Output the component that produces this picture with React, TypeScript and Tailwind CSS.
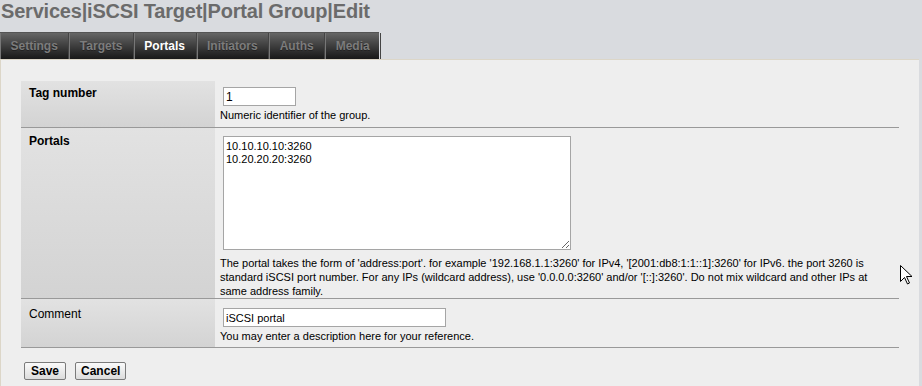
import React from "react";

const tabs = ["Settings", "Targets", "Portals", "Initiators", "Auths", "Media"];

export default function App() {
  return (
    <div className="relative w-[922px] h-[386px] overflow-hidden bg-[#d9dbdf] font-['Tahoma','Liberation_Sans',sans-serif] text-[11px] text-black">
      {/* Title */}
      <h1 className="h-[32px] pl-[1px] text-[20px] leading-[22px] font-bold text-[#6b6b6b] tracking-[-0.2px]">
        Services|iSCSI Target|Portal Group|Edit
      </h1>

      {/* Tabs */}
      <div className="flex h-[27px] w-[379px] border-t border-[#555] bg-gradient-to-b from-[#666] to-[#191919]">
        {tabs.map((t) => (
          <div
            key={t}
            className={
              "flex items-center px-[10.5px] text-[12px] font-bold border-r border-[#444] shadow-[inset_1px_0_0_#777] " +
              (t === "Portals" ? "text-white" : "text-[#7c7c7c] [text-shadow:0_1px_0_#222]")
            }
          >
            {t}
          </div>
        ))}
      </div>

      {/* Panel */}
      <div className="w-[919px] h-[330px] bg-[#eeeeee] border-t border-l border-[#dcd6c8] pt-[21px] pl-[20px]">
        <div className="w-[878px] border-b border-[#999]">
          {/* Tag number */}
          <div className="grid grid-cols-[194px_1fr] h-[47px] border-b border-[#999]">
            <div className="bg-gradient-to-b from-[#e2e2e2] to-[#d3d3d3] pl-[8px] pt-[5px] text-[12px] font-bold leading-[14px]">
              Tag number
            </div>
            <div className="pl-[5px] pt-[6px]">
              <input
                defaultValue="1"
                className="ml-[3px] block w-[73px] h-[19px] bg-white border border-[#a5a5a5] px-[2px] text-[12px] outline-none"
              />
              <div className="leading-[14px] mt-[2px]">Numeric identifier of the group.</div>
            </div>
          </div>

          {/* Portals */}
          <div className="grid grid-cols-[194px_1fr] h-[171px] border-b border-[#999]">
            <div className="bg-gradient-to-b from-[#e2e2e2] to-[#d3d3d3] pl-[8px] pt-[6px] text-[12px] font-bold leading-[14px]">
              Portals
            </div>
            <div className="pl-[5px] pt-[8px]">
              <textarea
                defaultValue={"10.10.10.10:3260\n10.20.20.20:3260"}
                className="ml-[3px] block w-[348px] h-[114px] bg-white border border-[#a5a5a5] px-[2px] py-[3px] text-[11px] leading-[13px] outline-none resize-y"
              />
              <div className="leading-[14px] mt-[6px] pr-[4px]">
                The portal takes the form of 'address:port'. for example '192.168.1.1:3260' for IPv4, '[2001:db8:1:1::1]:3260' for IPv6. the port 3260 is
                standard iSCSI port number. For any IPs (wildcard address), use '0.0.0.0:3260' and/or '[::]:3260'. Do not mix wildcard and other IPs at
                same address family.
              </div>
            </div>
          </div>

          {/* Comment */}
          <div className="grid grid-cols-[194px_1fr] h-[48px]">
            <div className="bg-gradient-to-b from-[#e2e2e2] to-[#d3d3d3] pl-[8px] pt-[8px] text-[12px] leading-[14px]">
              Comment
            </div>
            <div className="pl-[5px] pt-[9px]">
              <input
                defaultValue="iSCSI portal"
                className="ml-[3px] block w-[223px] h-[19px] bg-white border border-[#a5a5a5] px-[2px] text-[11px] outline-none"
              />
              <div className="leading-[14px] mt-[2px]">You may enter a description here for your reference.</div>
            </div>
          </div>
        </div>

        {/* Buttons */}
        <div className="flex gap-[9px] mt-[14px] pl-[3px]">
          <button className="h-[18px] px-[6px] rounded-[2px] border border-[#7a7a7a] bg-gradient-to-b from-[#fafafa] to-[#dcdcdc] text-[12px] font-bold leading-[14px]">
            Save
          </button>
          <button className="h-[18px] px-[5px] rounded-[2px] border border-[#7a7a7a] bg-gradient-to-b from-[#fafafa] to-[#dcdcdc] text-[12px] font-bold leading-[14px]">
            Cancel
          </button>
        </div>
      </div>

      {/* Mouse cursor */}
      <svg className="absolute left-[900px] top-[265px]" width="13" height="20" viewBox="0 0 13 20">
        <path d="M0.5 0.5 L0.5 16.5 L4.5 12.5 L7.5 19 L9.5 18 L6.5 11.5 L12 11.5 Z" fill="#fff" stroke="#000" strokeWidth="1" />
      </svg>
    </div>
  );
}
